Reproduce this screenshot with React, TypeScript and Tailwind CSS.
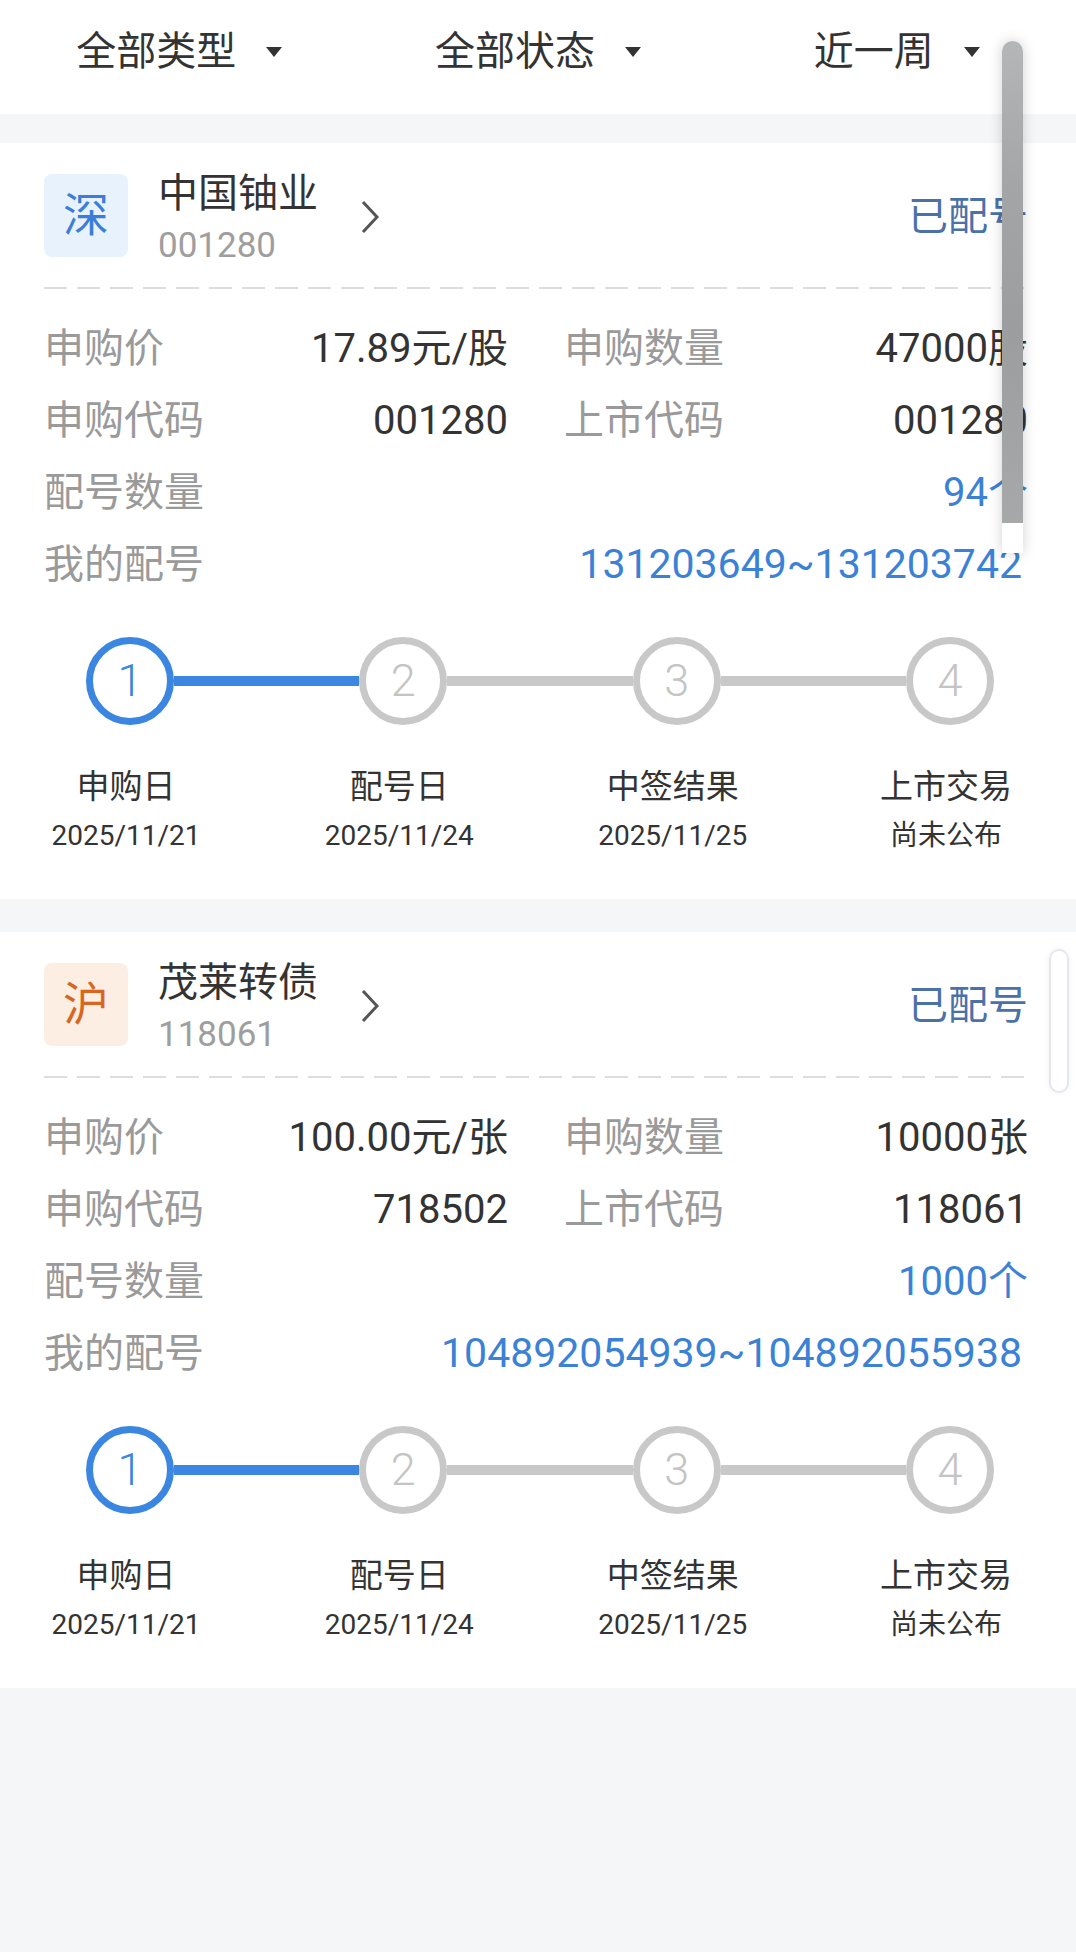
import React from "react";

type CardProps = {
  market: string;
  marketBg: string;
  marketColor: string;
  name: string;
  code: string;
  price: string;
  qty: string;
  buyCode: string;
  listCode: string;
  count: string;
  range: string;
};

const steps = [
  { n: "1", label: "申购日", date: "2025/11/21" },
  { n: "2", label: "配号日", date: "2025/11/24" },
  { n: "3", label: "中签结果", date: "2025/11/25" },
  { n: "4", label: "上市交易", date: "尚未公布" },
];

function Filter({ text }: { text: string }) {
  return (
    <div className="flex-1 flex items-center justify-center gap-[30px]">
      <span className="text-[40px] leading-[50px] text-[#333333]">{text}</span>
      <span className="w-0 h-0 border-l-[8px] border-r-[8px] border-t-[10px] border-l-transparent border-r-transparent border-t-[#333333]" />
    </div>
  );
}

function Card(p: CardProps) {
  return (
    <div className="bg-white h-[756px] pl-[44px] pr-[48px] pt-[31px]">
      <div className="flex items-center h-[83px]">
        <div
          className={`w-[84px] h-[83px] rounded-[8px] flex items-center justify-center text-[46px] ${p.marketBg} ${p.marketColor}`}
        >
          {p.market}
        </div>
        <div className="ml-[30px] self-start mt-[-5px] flex flex-col">
          <span className="text-[40px] leading-[50px] text-[#333333]">{p.name}</span>
          <span className="mt-[5px] text-[35px] leading-[44px] text-[#9e9e9e]">{p.code}</span>
        </div>
        <svg width="20" height="34" viewBox="0 0 20 34" className="ml-[42px] mt-[2px]">
          <polyline points="3,2 17,17 3,32" fill="none" stroke="#555555" strokeWidth="3" />
        </svg>
        <div className="flex-1" />
        <span className="mt-[3px] text-[40px] leading-[50px] text-[#4a71a8]">已配号</span>
      </div>
      <div className="mt-[30px] h-[2px] bg-[linear-gradient(to_right,#dddddd_23px,transparent_23px)] bg-[length:33px_2px] bg-repeat-x" />
      <div className="mt-[24px]">
        <div className="grid grid-cols-2 gap-x-[56px]">
          <div className="h-[72px] flex items-center justify-between">
            <span className="text-[40px] text-[#9a9a9a]">申购价</span>
            <span className="text-[40px] text-[#333333]">{p.price}</span>
          </div>
          <div className="h-[72px] flex items-center justify-between">
            <span className="text-[40px] text-[#9a9a9a]">申购数量</span>
            <span className="text-[40px] text-[#333333]">{p.qty}</span>
          </div>
          <div className="h-[72px] flex items-center justify-between">
            <span className="text-[40px] text-[#9a9a9a]">申购代码</span>
            <span className="text-[40px] text-[#333333]">{p.buyCode}</span>
          </div>
          <div className="h-[72px] flex items-center justify-between">
            <span className="text-[40px] text-[#9a9a9a]">上市代码</span>
            <span className="text-[40px] text-[#333333]">{p.listCode}</span>
          </div>
        </div>
        <div className="h-[72px] flex items-center justify-between">
          <span className="text-[40px] text-[#9a9a9a]">配号数量</span>
          <span className="text-[40px] text-[#3b82d6]">{p.count}</span>
        </div>
        <div className="h-[72px] flex items-center justify-between">
          <span className="text-[40px] text-[#9a9a9a]">我的配号</span>
          <span className="text-[41px] text-[#3b82d6] pr-[6px]">{p.range}</span>
        </div>
      </div>
      <div className="mt-[36px] pl-[42px] pr-[34px] flex items-center">
        {steps.map((s, i) => (
          <React.Fragment key={s.n}>
            <div
              className={`w-[88px] h-[88px] shrink-0 rounded-full border-[7px] flex items-center justify-center text-[45px] font-light ${
                i === 0 ? "border-[#3a86e0] text-[#3a86e0]" : "border-[#c8c8c8] text-[#c4c4c4]"
              }`}
            >
              {s.n}
            </div>
            {i < steps.length - 1 && (
              <div className={`flex-1 h-[10px] ${i === 0 ? "bg-[#3a86e0]" : "bg-[#c8c8c8]"}`} />
            )}
          </React.Fragment>
        ))}
      </div>
      <div className="mt-[42px] flex justify-between">
        {steps.map((s) => (
          <div key={s.n} className="w-[164px] flex flex-col items-center">
            <span className="text-[33px] leading-[40px] text-[#333333] whitespace-nowrap">{s.label}</span>
            <span className="mt-[12px] text-[28px] leading-[34px] text-[#333333] whitespace-nowrap">{s.date}</span>
          </div>
        ))}
      </div>
    </div>
  );
}

export default function App() {
  return (
    <div className="relative w-[1076px] min-h-[1952px] bg-[#f5f6f8] font-['Roboto','Noto_Sans_CJK_SC',sans-serif] overflow-hidden">
      <div className="bg-white h-[114px]">
        <div className="flex h-[103px] items-center">
          <Filter text="全部类型" />
          <Filter text="全部状态" />
          <Filter text="近一周" />
        </div>
      </div>
      <div className="mt-[29px] flex flex-col gap-[33px]">
        <Card
          market="深"
          marketBg="bg-[#e8f2fd]"
          marketColor="text-[#3b7dd8]"
          name="中国铀业"
          code="001280"
          price="17.89元/股"
          qty="47000股"
          buyCode="001280"
          listCode="001280"
          count="94个"
          range="131203649~131203742"
        />
        <Card
          market="沪"
          marketBg="bg-[#fdeee4]"
          marketColor="text-[#d9661f]"
          name="茂莱转债"
          code="118061"
          price="100.00元/张"
          qty="10000张"
          buyCode="718502"
          listCode="118061"
          count="1000个"
          range="104892054939~104892055938"
        />
      </div>
      {/* scroll indicator overlays */}
      <div className="absolute left-[1002px] top-[41px] w-[21px] h-[512px] rounded-t-full rounded-b-[6px] overflow-hidden shadow-[0_0_14px_rgba(0,0,0,0.18)] bg-white">
        <div className="h-[482px] bg-[linear-gradient(to_bottom,#b5b6b8,#a4a5a7_30%,#9c9d9f_60%,#a7a8aa)]" />
      </div>
      <div className="absolute left-[1049px] top-[949px] w-[20px] h-[144px] rounded-full border-2 border-[#e4e8ee] bg-white shadow-[0_0_6px_rgba(0,0,0,0.06)]" />
    </div>
  );
}
